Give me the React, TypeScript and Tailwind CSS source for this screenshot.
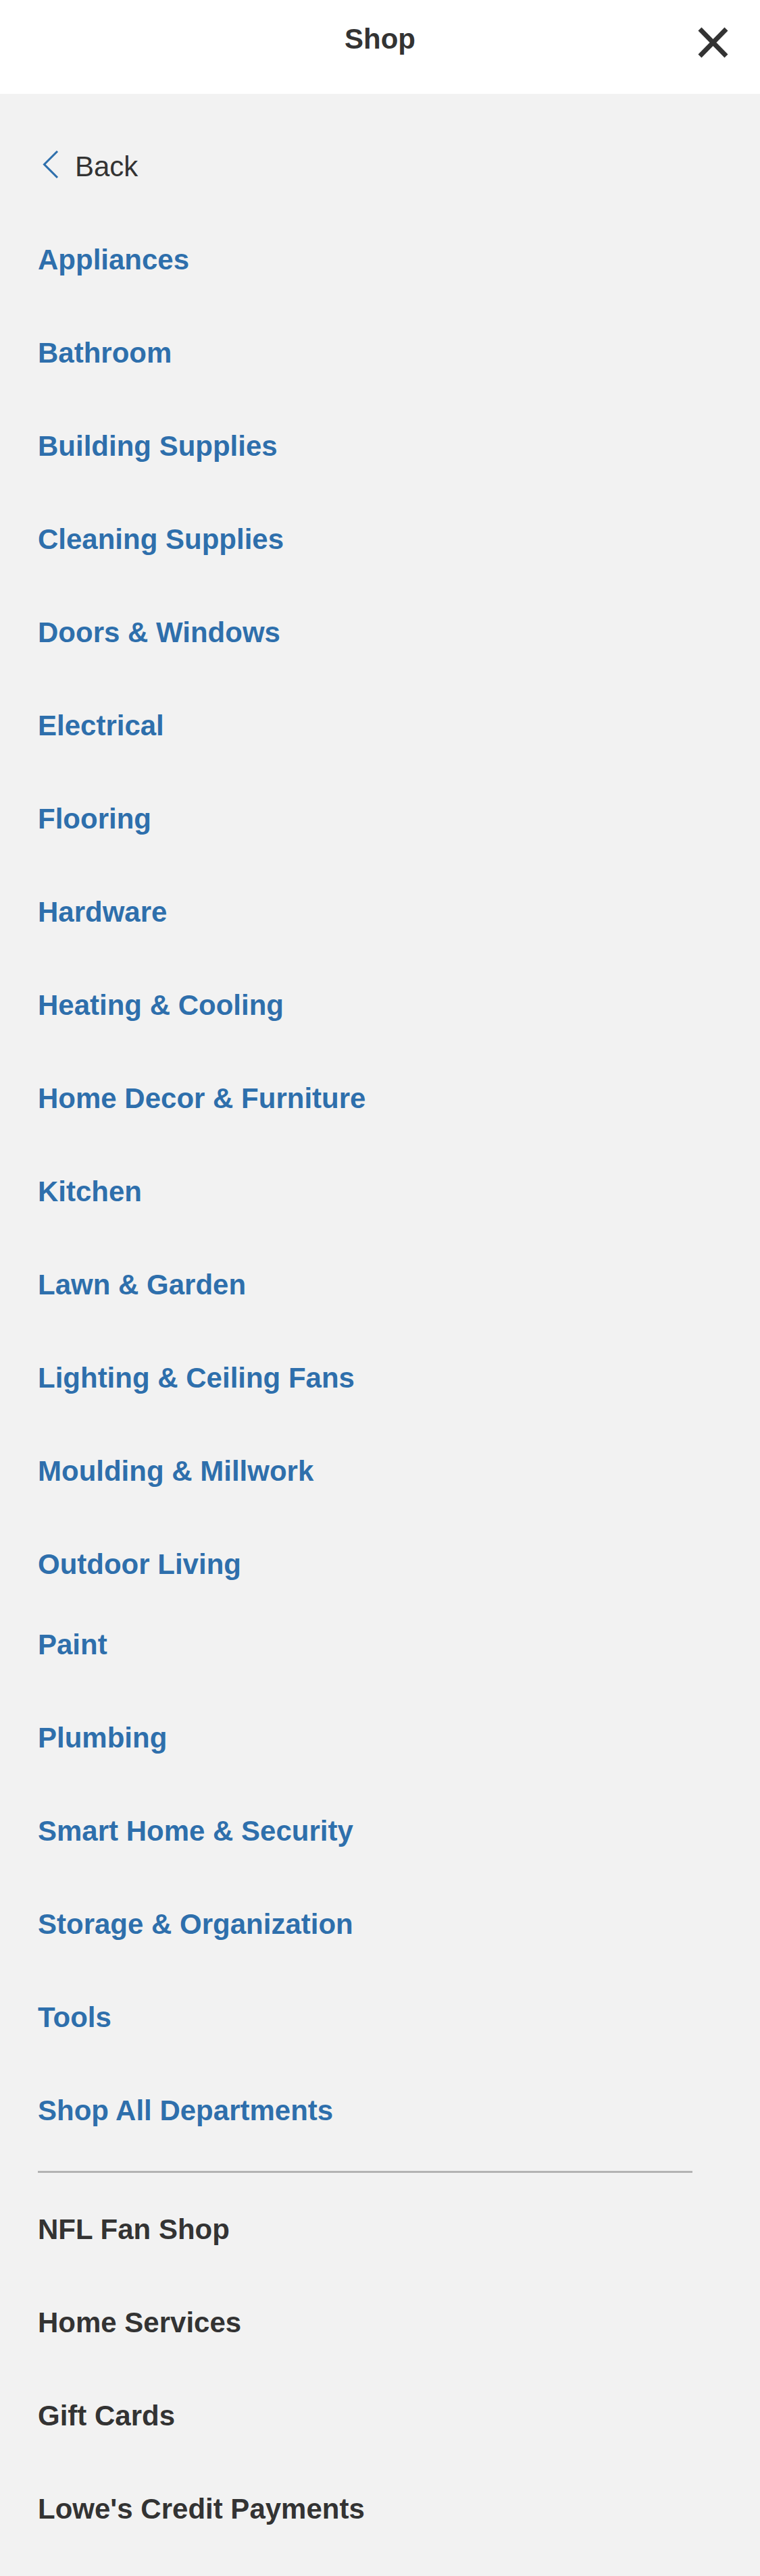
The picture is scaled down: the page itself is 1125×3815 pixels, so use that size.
const departments = [
  "Appliances",
  "Bathroom",
  "Building Supplies",
  "Cleaning Supplies",
  "Doors & Windows",
  "Electrical",
  "Flooring",
  "Hardware",
  "Heating & Cooling",
  "Home Decor & Furniture",
  "Kitchen",
  "Lawn & Garden",
  "Lighting & Ceiling Fans",
  "Moulding & Millwork",
  "Outdoor Living",
  "Paint",
  "Plumbing",
  "Smart Home & Security",
  "Storage & Organization",
  "Tools",
  "Shop All Departments",
];

const extras = ["NFL Fan Shop", "Home Services", "Gift Cards", "Lowe's Credit Payments"];

export default function App() {
  return (
    <div className="min-h-[3815px] bg-[#f2f2f2] font-['Liberation_Sans',Arial,sans-serif]">
      {/* Header */}
      <header className="grid h-[139px] grid-cols-[1fr_auto_1fr] items-start bg-white">
        <div />
        <h1 className="pt-[33px] text-[42px] font-bold leading-[50px] text-[#333333]">Shop</h1>
        <div className="flex justify-end pr-[46px] pt-[40px]">
          <button aria-label="Close" className="h-[46px] w-[47px] text-[#333333]">
            <svg viewBox="0 0 47 46" width="47" height="46" fill="none" stroke="currentColor" strokeWidth="7">
              <path d="M4 3 L43 43 M43 3 L4 43" />
            </svg>
          </button>
        </div>
      </header>

      {/* Menu */}
      <nav className="pb-[30px] pt-[39px]">
        <a className="flex items-center py-[44px] pl-[56px] text-[42px] leading-[50px] text-[#333333]">
          <svg viewBox="0 0 24 41" width="24" height="41" className="ml-[7px] -mt-[8px]" fill="none" stroke="#2e6fac" strokeWidth="3">
            <path d="M22 1 L2.5 20.5 L22 40" />
          </svg>
          <span className="ml-[24px]">Back</span>
        </a>

        {departments.map((name) => (
          <a
            key={name}
            className={`block pl-[56px] pt-[44px] text-[42px] font-bold leading-[50px] text-[#2e6fac] ${
              name === "Outdoor Living" ? "pb-[25px]" : "pb-[44px]"
            }`}
          >
            {name}
          </a>
        ))}

        <div className="mb-[15px] ml-[56px] mt-[20px] h-[3px] w-[969px] bg-[#b3b3b3]" />

        {extras.map((name) => (
          <a key={name} className="block py-[44px] pl-[56px] text-[42px] font-bold leading-[50px] text-[#333333]">
            {name}
          </a>
        ))}
      </nav>
    </div>
  );
}
